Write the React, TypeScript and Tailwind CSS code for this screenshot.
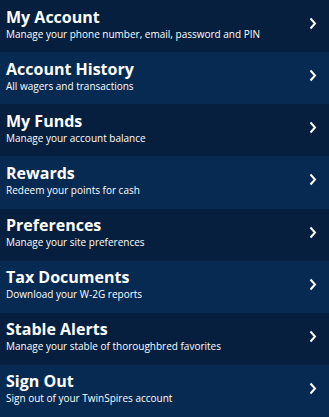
import React from "react";

const items = [
  { title: "My Account", sub: "Manage your phone number, email, password and PIN" },
  { title: "Account History", sub: "All wagers and transactions" },
  { title: "My Funds", sub: "Manage your account balance" },
  { title: "Rewards", sub: "Redeem your points for cash" },
  { title: "Preferences", sub: "Manage your site preferences" },
  { title: "Tax Documents", sub: "Download your W-2G reports" },
  { title: "Stable Alerts", sub: "Manage your stable of thoroughbred favorites" },
  { title: "Sign Out", sub: "Sign out of your TwinSpires account" },
];

function Chevron() {
  return (
    <svg width="8" height="13" viewBox="0 0 8 13" fill="none">
      <path d="M1.5 1.5L6 6.5L1.5 11.5" stroke="white" strokeWidth="2" />
    </svg>
  );
}

export default function App() {
  return (
    <div
      className="w-[329px] h-[417px] flex flex-col text-white"
      style={{ fontFamily: '"Open Sans", "Noto Sans", sans-serif' }}
    >
      {items.map((item, i) => (
        <div
          key={item.title}
          className={
            i % 2 === 0
              ? "flex-1 flex items-center justify-between pl-[6px] pr-[12px] bg-[#061f3e]"
              : "flex-1 flex items-center justify-between pl-[6px] pr-[12px] bg-[#072a52]"
          }
        >
          <div className="flex flex-col -mt-[4px]">
            <div className="text-[16px] font-bold leading-[19px]">{item.title}</div>
            <div className="text-[10px] leading-[14px]">{item.sub}</div>
          </div>
          <div className="-mt-[5px]">
            <Chevron />
          </div>
        </div>
      ))}
    </div>
  );
}
